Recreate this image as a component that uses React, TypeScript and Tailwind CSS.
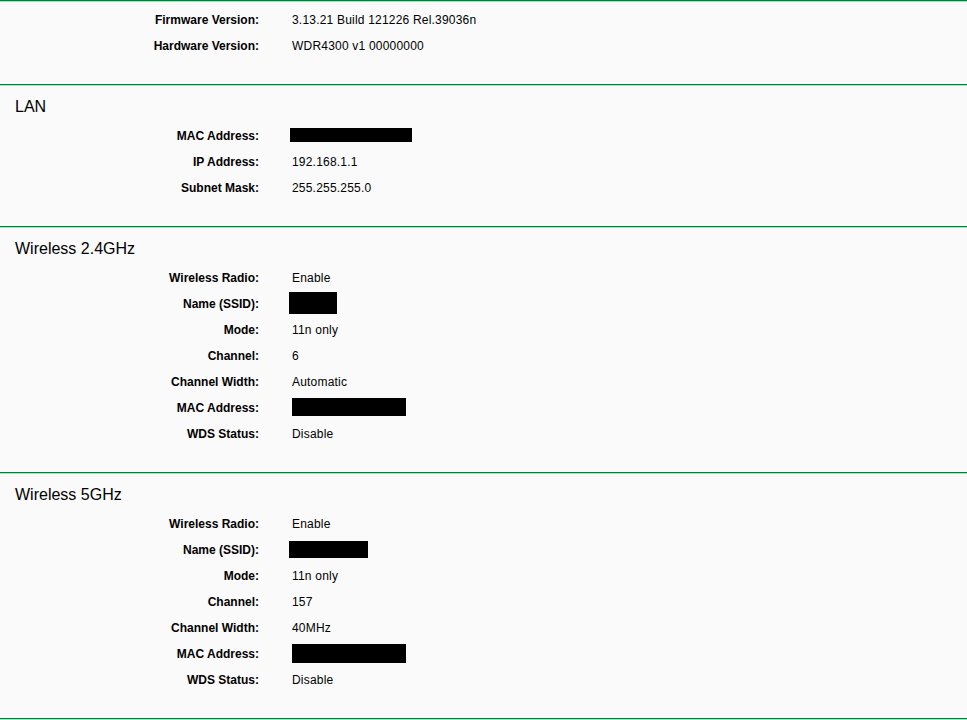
type Row = { label: string; value?: string; box?: { w: number; h: number; x: number } };

type Section = { title?: string; rows: Row[] };

const sections: Section[] = [
  {
    rows: [
      { label: "Firmware Version:", value: "3.13.21 Build 121226 Rel.39036n" },
      { label: "Hardware Version:", value: "WDR4300 v1 00000000" },
    ],
  },
  {
    title: "LAN",
    rows: [
      { label: "MAC Address:", box: { w: 122, h: 14, x: 290 } },
      { label: "IP Address:", value: "192.168.1.1" },
      { label: "Subnet Mask:", value: "255.255.255.0" },
    ],
  },
  {
    title: "Wireless 2.4GHz",
    rows: [
      { label: "Wireless Radio:", value: "Enable" },
      { label: "Name (SSID):", box: { w: 48, h: 22, x: 289 } },
      { label: "Mode:", value: "11n only" },
      { label: "Channel:", value: "6" },
      { label: "Channel Width:", value: "Automatic" },
      { label: "MAC Address:", box: { w: 114, h: 18, x: 292 } },
      { label: "WDS Status:", value: "Disable" },
    ],
  },
  {
    title: "Wireless 5GHz",
    rows: [
      { label: "Wireless Radio:", value: "Enable" },
      { label: "Name (SSID):", box: { w: 79, h: 17, x: 289 } },
      { label: "Mode:", value: "11n only" },
      { label: "Channel:", value: "157" },
      { label: "Channel Width:", value: "40MHz" },
      { label: "MAC Address:", box: { w: 114, h: 19, x: 292 } },
      { label: "WDS Status:", value: "Disable" },
    ],
  },
];

function Divider() {
  return (
    <div>
      <div className="h-px bg-[#0a7a3c]" />
      <div className="h-px bg-[#b7dbc2]" />
    </div>
  );
}

function InfoRow({ row }: { row: Row }) {
  return (
    <div className="flex h-[26px] items-center">
      <div className="w-[259px] shrink-0 pt-[2px] text-right font-bold">{row.label}</div>
      {row.box ? (
        <div
          className="bg-black"
          style={{ width: row.box.w, height: row.box.h, marginLeft: row.box.x - 259 }}
        />
      ) : (
        <div className="ml-[33px] pt-[2px] tracking-[0.2px]">{row.value}</div>
      )}
    </div>
  );
}

export default function App() {
  return (
    <div className="min-h-[720px] bg-[#fafafa] font-['Liberation_Sans',Arial,sans-serif] text-[12px] text-black">
      {sections.map((s, i) => (
        <div key={i}>
          <Divider />
          {s.title ? (
            <div className="mt-[11px] mb-[5px] h-[20px] pl-[15px] text-[16px] leading-[20px]">
              {s.title}
            </div>
          ) : (
            <div className="h-[4px]" />
          )}
          <div className="pb-[26px]">
            {s.rows.map((r, j) => (
              <InfoRow key={j} row={r} />
            ))}
          </div>
        </div>
      ))}
      <Divider />
    </div>
  );
}
